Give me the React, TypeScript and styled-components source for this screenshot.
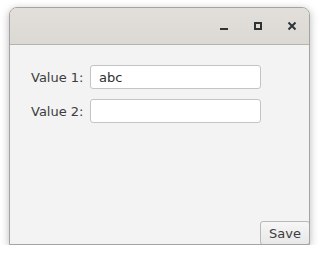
import styled, { createGlobalStyle } from 'styled-components'

const Global = createGlobalStyle`
  html, body { margin:0; padding:0; background:#fff; }
  body { font-family:"DejaVu Sans", "Liberation Sans", sans-serif; }
`

const Frame = styled.div`
  margin:7px 0 0 9px;
  width:301px;
  height:238px;
  box-sizing:border-box;
  border:1px solid #a4a4a4;
  border-radius:8px 8px 0 0;
  box-shadow:0 2px 8px rgba(0,0,0,.28);
  display:flex;
  flex-direction:column;
  overflow:hidden;
  background:#f3f3f3;
`
const TitleBar = styled.div`
  height:36px;
  flex:none;
  background:linear-gradient(#e2dfdb,#dcd9d5);
  border-bottom:1px solid #b7b4af;
  display:flex;
  align-items:center;
  justify-content:flex-end;
  padding-right:9px;
  gap:18px;
`
const WinBtn = styled.div`
  width:16px;
  height:16px;
  display:flex;
  align-items:center;
  justify-content:center;
  color:#2e3436;
`
const Body = styled.div`
  flex:1;
  display:flex;
  flex-direction:column;
`
const Form = styled.div`
  flex:1;
  padding:20px 0 0 21px;
  display:flex;
  flex-direction:column;
  gap:10px;
`
const Row = styled.div`
  display:flex;
  align-items:center;
  gap:8px;
`
const Label = styled.label`
  font-size:13px;
  color:#3c3c3c;
  width:51px;
  white-space:nowrap;
`
const Field = styled.div`
  width:171px;
  height:24px;
  box-sizing:border-box;
  background:#fff;
  border:1px solid #c4c4c4;
  border-radius:3px;
  font-size:13px;
  color:#2e2e2e;
  padding:0 8px;
  display:flex;
  align-items:center;
`
const Footer = styled.div`
  display:flex;
  justify-content:flex-end;
`
const Button = styled.button`
  width:50px;
  height:24px;
  margin:0 -1px -1px 0;
  box-sizing:border-box;
  border:1px solid #b9b9b9;
  border-radius:3px;
  background:linear-gradient(#f6f6f6,#e8e8e8);
  font-family:"DejaVu Sans", "Liberation Sans", sans-serif;
  font-size:13px;
  color:#3c3c3c;
  padding:0;
`

export default function App() {
  return (
    <>
      <Global />
      <Frame>
        <TitleBar>
          <WinBtn>
            <svg width="10" height="10" viewBox="0 0 10 10"><rect x="1" y="7" width="8" height="2" fill="currentColor" /></svg>
          </WinBtn>
          <WinBtn>
            <svg width="10" height="10" viewBox="0 0 10 10"><rect x="2" y="2" width="6" height="6" fill="none" stroke="currentColor" strokeWidth="2" /></svg>
          </WinBtn>
          <WinBtn>
            <svg width="10" height="10" viewBox="0 0 10 10"><path d="M1.5 1.5L8.5 8.5M8.5 1.5L1.5 8.5" stroke="currentColor" strokeWidth="2" /></svg>
          </WinBtn>
        </TitleBar>
        <Body>
          <Form>
            <Row><Label>Value 1:</Label><Field>abc</Field></Row>
            <Row><Label>Value 2:</Label><Field /></Row>
          </Form>
          <Footer><Button>Save</Button></Footer>
        </Body>
      </Frame>
    </>
  )
}
